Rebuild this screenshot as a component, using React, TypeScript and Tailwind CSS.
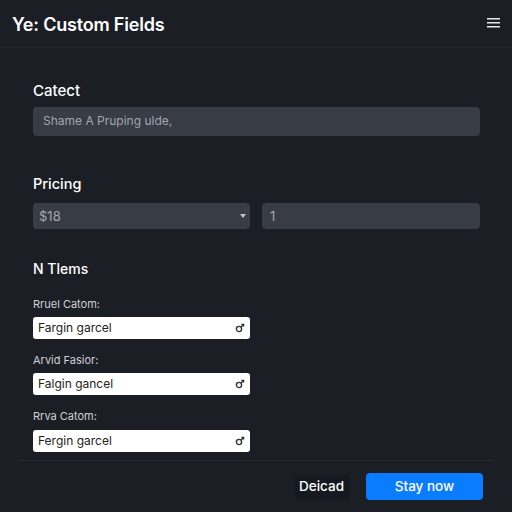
import React from "react";

function MaleIcon() {
  return (
    <svg width="10" height="10" viewBox="0 0 10 10" fill="none" stroke="#333" strokeWidth="1.4">
      <circle cx="4" cy="6" r="2.6" />
      <path d="M6 4 L8.6 1.4 M6.4 1.4 H8.6 V3.6" />
    </svg>
  );
}

function WhiteInput({ value }: { value: string }) {
  return (
    <div className="w-[217px] h-[22px] bg-white rounded-[3px] flex items-center justify-between pl-[5px] pr-[5px]">
      <span className="text-[12px] text-[#222]">{value}</span>
      <MaleIcon />
    </div>
  );
}

export default function App() {
  return (
    <div
      className="w-[512px] h-[512px] bg-[#1b1e25] flex flex-col overflow-hidden"
      style={{ fontFamily: "Inter, 'Liberation Sans', sans-serif" }}
    >
      <div className="h-[48px] flex items-center justify-between pl-[12px] pr-[12px] border-b border-[#22262d] shrink-0">
        <div className="text-[18px] font-semibold text-white tracking-[-0.2px] mt-[2px]">Ye: Custom Fields</div>
        <svg width="13" height="11" viewBox="0 0 13 11" className="mt-[-3px]">
          <rect x="0" y="1" width="13" height="1.5" fill="#e5e7eb" />
          <rect x="0" y="5" width="13" height="1.5" fill="#e5e7eb" />
          <rect x="0" y="9" width="13" height="1.5" fill="#e5e7eb" />
        </svg>
      </div>

      <div className="flex flex-col px-[33px] pr-[32px] flex-1">
        <div className="mt-[32px] text-[15px] font-medium text-white">Catect</div>
        <div className="mt-[4px] h-[29px] bg-[#373c45] rounded-[4px] flex items-center px-[10px] text-[12px] text-[#a3a7ae]">
          Shame A Pruping ulde,
        </div>

        <div className="mt-[37px] text-[14.5px] font-medium text-white">Pricing</div>
        <div className="mt-[9px] flex gap-[12px]">
          <div className="w-[217px] h-[26px] bg-[#373c45] rounded-[4px] flex items-center justify-between pl-[6px] pr-[4px] text-[13px] text-[#a3a7ae]">
            <span>$18</span>
            <svg width="6" height="4" viewBox="0 0 6 4"><path d="M0 0 H6 L3 4 Z" fill="#c0c3c8" /></svg>
          </div>
          <div className="flex-1 h-[26px] bg-[#373c45] rounded-[4px] flex items-center px-[8px] text-[13px] text-[#a3a7ae]">1</div>
        </div>

        <div className="mt-[29px] text-[14px] font-medium text-white">N Tlems</div>

        <div className="mt-[17px] text-[11px] leading-[16px] text-[#cfd1d5]">Rruel Catom:</div>
        <div className="mt-[5px]"><WhiteInput value="Fargin garcel" /></div>
        <div className="mt-[13px] text-[11px] leading-[16px] text-[#cfd1d5]">Arvid Fasior:</div>
        <div className="mt-[5px]"><WhiteInput value="Falgin gancel" /></div>
        <div className="mt-[13px] text-[11px] leading-[16px] text-[#cfd1d5]">Rrva Catom:</div>
        <div className="mt-[6px]"><WhiteInput value="Fergin garcel" /></div>
      </div>

      <div className="mx-[18px] border-t border-[#262a31] h-[52px] flex items-center justify-end gap-[17px] pr-[11px] shrink-0">
        <div className="h-[24px] px-[5px] bg-[#161920] rounded-[3px] flex items-center text-[13.5px] font-medium text-white">Deicad</div>
        <div className="w-[117px] h-[27px] bg-[#0a7cff] rounded-[4px] flex items-center justify-center text-[13.5px] font-medium text-white">Stay now</div>
      </div>
    </div>
  );
}
